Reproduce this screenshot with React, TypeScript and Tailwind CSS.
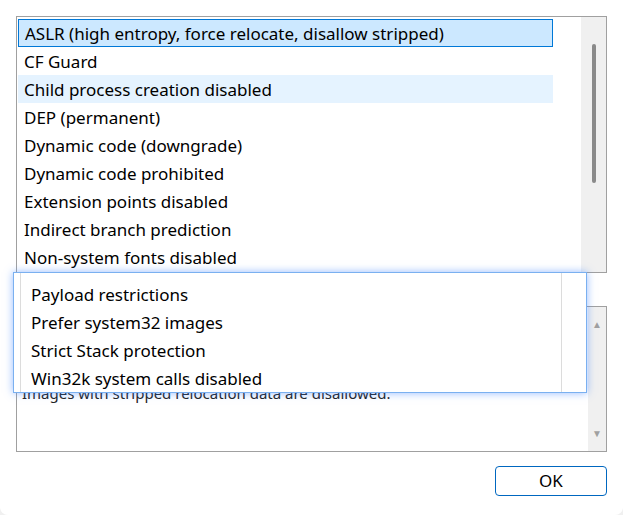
import React from "react";

const items = [
  "ASLR (high entropy, force relocate, disallow stripped)",
  "CF Guard",
  "Child process creation disabled",
  "DEP (permanent)",
  "Dynamic code (downgrade)",
  "Dynamic code prohibited",
  "Extension points disabled",
  "Indirect branch prediction",
  "Non-system fonts disabled",
];

const popupItems = [
  "Payload restrictions",
  "Prefer system32 images",
  "Strict Stack protection",
  "Win32k system calls disabled",
];

export default function App() {
  return (
    <div
      className="w-[623px] h-[515px] bg-[#f0f0f0] relative overflow-hidden"
      style={{ fontFamily: '"Noto Sans", "Open Sans", sans-serif' }}
    >
      <div className="absolute inset-0 bg-white rounded-b-[8px] flex flex-col px-4 pt-4">
        {/* main list */}
        <div className="h-[257px] border border-[#a0a0a0] flex overflow-hidden">
          <div className="flex-1 pt-[2px] pl-[1px] pr-[28px]">
            {items.map((t, i) => (
              <div
                key={t}
                className={`h-[28px] flex items-center pl-[6px] text-[17px] text-black leading-none ${
                  i === 0
                    ? "bg-[#cce8ff] border border-[#0078d7] pl-[5px]"
                    : i === 2
                    ? "bg-[#e5f3ff]"
                    : ""
                }`}
              >
                {t}
              </div>
            ))}
          </div>
          <div className="w-[25px] bg-[#f0f0f0] flex justify-center pt-[27px]">
            <div className="w-[4px] h-[139px] rounded-full bg-[#8a8a8a]" />
          </div>
        </div>
        {/* description */}
        <div className="mt-[33px] h-[146px] border border-[#a0a0a0] flex">
          <div className="flex-1 pl-[5px] pt-[79px] text-[15px] text-[#222] leading-none">
            Images with stripped relocation data are disallowed.
          </div>
          <div className="w-[18px] bg-[#f0f0f0] flex flex-col items-center justify-between py-[10px] text-[10px] text-[#a0a0a0]">
            <span>▲</span>
            <span>▼</span>
          </div>
        </div>
        <div className="flex justify-end mt-[14px]">
          <button className="w-[112px] h-[30px] border border-[#0067c0] rounded-[4px] bg-white text-[17px] text-black">
            OK
          </button>
        </div>
      </div>
      {/* dropdown popup */}
      <div className="absolute left-[13px] top-[272px] w-[574px] h-[121px] bg-white border border-[#7ab0f0] shadow-[0_0_8px_rgba(60,130,255,0.55)] flex">
        <div className="w-[7px] border-r border-[#dcdcdc]" />
        <div className="flex-1 flex flex-col pt-[7px]">
          {popupItems.map((t) => (
            <div key={t} className="h-[28px] flex items-center pl-[10px] text-[17px] text-black leading-none">
              {t}
            </div>
          ))}
        </div>
        <div className="w-[25px] border-l border-[#dcdcdc]" />
      </div>
    </div>
  );
}
